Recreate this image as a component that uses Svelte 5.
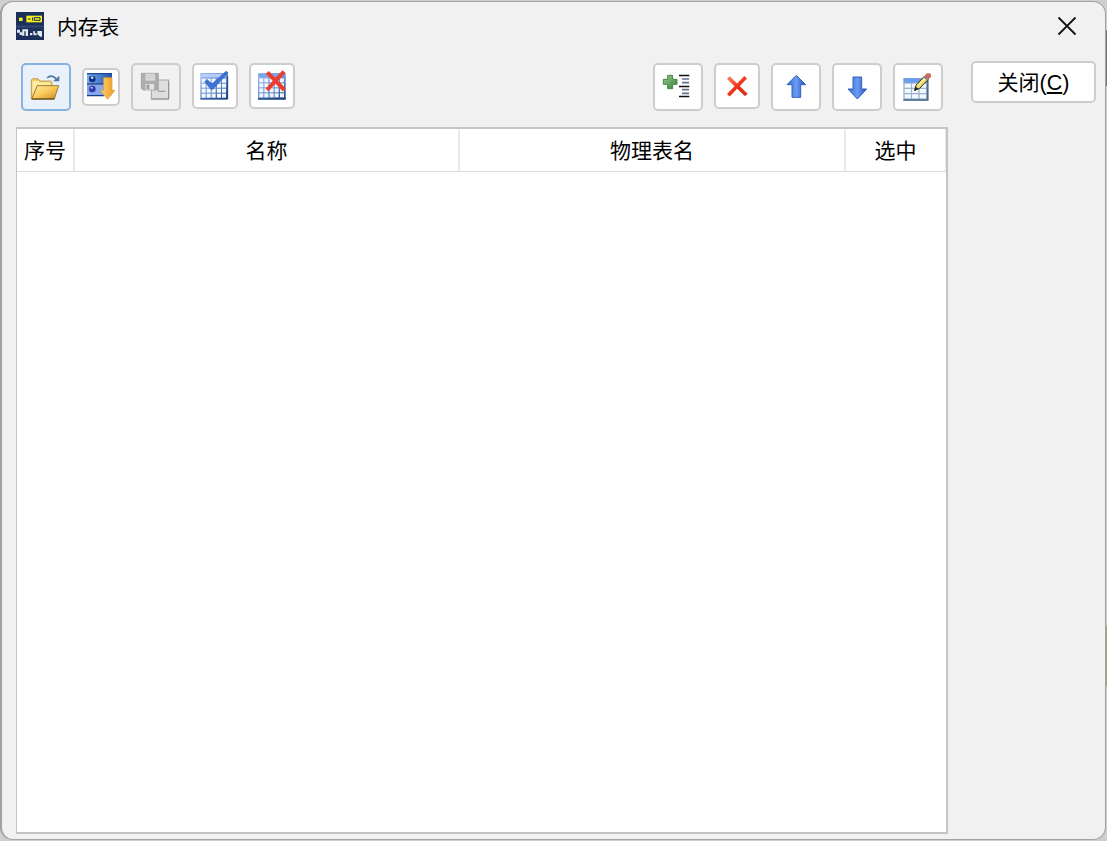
<svelte:options runes={true} />

<script lang="ts">
const columns = [
	{ key: "index", label: "序号", width: 58 },
	{ key: "name", label: "名称", width: 385 },
	{ key: "table", label: "物理表名", width: 386 },
	{ key: "checked", label: "选中", width: 100 },
];
</script>

<div class="desktop">
	<div class="window">
		<header class="titlebar">
			<svg class="app-icon" viewBox="48 36 84 84" aria-hidden="true">
				<rect x="48" y="36" width="84" height="84" fill="#1b2f5c" />
				<rect x="48" y="76" width="84" height="7" fill="#30446d" />
				<rect x="57" y="53" width="11" height="10" fill="#f3ee1c" />
				<path d="M79 47H126V67H79Z" fill="#f3ee1c" />
				<path d="M84 57H92M98 52V62M103 53H120V61H103Z" fill="none" stroke="#1b2f5c" stroke-width="3" />
				<path d="M51 89H60V97H66V105H59V98H51ZM67 88H84V108H77V94H73V107H66ZM90 99H97V106H90ZM99 94H105V100H110V106H101ZM112 93H126V110H121L112 103Z" fill="#e4e8ef" />
			</svg>
			<h1>内存表</h1>
			<button class="dismiss" aria-label="关闭">
				<svg viewBox="0 0 20 20"><path d="M1.5 1.5 18.5 18.5M18.5 1.5 1.5 18.5" /></svg>
			</button>
		</header>

		<div class="content">
			<main>
				<div class="toolbar">
					<div class="group">
						<button class="tool active" aria-label="打开">
							<svg viewBox="33 27 138 132">
								<defs>
									<linearGradient id="folder" x1="0" y1="0" x2="1" y2="1">
										<stop offset="0" stop-color="#fff0a8" />
										<stop offset=".5" stop-color="#fbc95a" />
										<stop offset="1" stop-color="#c98a22" />
									</linearGradient>
								</defs>
								<path d="M58 129V72L62 68H78L83 75H116L120 79V92L110 128Z" fill="#f0c65c" stroke="#a8802c" stroke-width="2" />
								<path d="M61 74H80L84 79H116V88H75L61 120Z" fill="#fdeb9f" />
								<path d="M59 129 76 89H140L127 129Z" fill="url(#folder)" stroke="#8d6a22" stroke-width="2.5" />
								<path d="M60 129H127" stroke="#4d3b16" stroke-width="3" />
								<path d="M105 66Q117 55 130 66L133 70" fill="none" stroke="#57779b" stroke-width="5" />
								<path d="M123 76H142V59Z" fill="#57779b" />
							</svg>
						</button>
						<button class="tool small" aria-label="导入">
							<svg viewBox="216 42 102 102">
								<defs>
									<linearGradient id="server">
										<stop offset="0" stop-color="#79aef2" />
										<stop offset="1" stop-color="#1f52ab" />
									</linearGradient>
									<linearGradient id="gold">
										<stop offset="0" stop-color="#ffd375" />
										<stop offset="1" stop-color="#eb9a1d" />
									</linearGradient>
								</defs>
								<rect x="225" y="51" width="75" height="32" fill="url(#server)" />
								<rect x="225" y="51" width="75" height="4" fill="#1d4b98" />
								<rect x="225" y="87" width="73" height="32" fill="#85a6ed" />
								<path d="M225 84H298M225 119H275" stroke="#183a86" stroke-width="4" />
								<circle cx="241" cy="69" r="10" fill="#12347e" />
								<circle cx="241" cy="99" r="10" fill="#2c3aa8" />
								<path d="M237 62H244V68H237Z" fill="#d9f5ff" />
								<path d="M236 93H242V98H236Z" fill="#bfc8ff" />
								<path d="M275 65H300V103H309L287 130 265 103H275Z" fill="url(#gold)" stroke="#e39a2c" stroke-width="2" />
							</svg>
						</button>
						<button class="tool disabled" aria-label="保存" disabled>
							<svg viewBox="27 27 138 132">
								<rect x="82" y="72" width="52" height="57" fill="#dedede" stroke="#a5a5a5" stroke-width="3" />
								<path d="M83 129H134V76" fill="none" stroke="#8f8f8f" stroke-width="3" />
								<path d="M102 106H124" stroke="#a0a0a0" stroke-width="4" />
								<path d="M52 52H103V102H57L52 97Z" fill="#adadad" stroke="#969696" stroke-width="2" />
								<rect x="64" y="53" width="29" height="21" fill="#dadada" />
								<path d="M66 59H91M66 65H91" stroke="#c3c3c3" stroke-width="2" />
								<rect x="65" y="84" width="25" height="17" fill="#e3e3e3" />
								<rect x="68" y="86" width="8" height="13" fill="#9b9b9b" />
							</svg>
						</button>
						<button class="tool medium" aria-label="全选">
							<svg viewBox="210 27 126 126">
								<defs>
									<linearGradient id="grid" x1="0" y1="0" x2="1" y2="1">
										<stop offset="0" stop-color="#9cbdf2" />
										<stop offset=".6" stop-color="#5f88c4" />
										<stop offset="1" stop-color="#173f80" />
									</linearGradient>
								</defs>
								<rect x="229" y="51" width="83" height="79" fill="url(#grid)" />
								<rect x="232" y="54" width="73" height="10" fill="#b5cdf8" />
								{#each [68, 83, 98, 113] as y (y)}
									{#each [233, 248, 263, 279, 294] as x (x)}
										<rect {x} {y} width="12" height="12" fill="#f4f8ff" />
									{/each}
								{/each}
								<path d="M229 129H311V60" fill="none" stroke="#1d4686" stroke-width="3" />
								<path d="M242 77 250 71 264 84 306 46 312 50 267 100 260 99Z" fill="#3c73d4" stroke="#3163bd" stroke-width="2" />
							</svg>
						</button>
						<button class="tool medium" aria-label="取消全选">
							<svg viewBox="33 27 126 126">
								<rect x="54" y="51" width="83" height="79" fill="url(#grid)" />
								<rect x="57" y="54" width="76" height="9" fill="#7ea4eb" />
								{#each [67, 82, 97, 112] as y (y)}
									{#each [58, 73, 89, 104, 120] as x (x)}
										<rect {x} {y} width="12" height="12" fill="#f2f7ff" />
									{/each}
								{/each}
								<path d="M54 129H137" stroke="#173f76" stroke-width="4" />
								<path d="M82 49 133 102M132 47 81 102" stroke="#ef3b2a" stroke-width="12" />
							</svg>
						</button>
					</div>
					<div class="group">
						<button class="tool" aria-label="添加">
							<svg viewBox="30 27 138 132">
								<defs>
									<linearGradient id="plus" x1="0" y1="0" x2="1" y2="1">
										<stop offset="0" stop-color="#9bce8c" />
										<stop offset="1" stop-color="#347e36" />
									</linearGradient>
								</defs>
								<path d="M68 58H83V70H96V85H83V98H68V85H55V70H68Z" fill="url(#plus)" stroke="#4b8549" stroke-width="3" />
								<path d="M102 58.5H133M102 91.5H133M102 121.5H133" stroke="#111" stroke-width="4" />
								<path d="M111 69H132M111 80H132M111 101H132M111 112H132" stroke="#64748c" stroke-width="5" />
							</svg>
						</button>
						<button class="tool medium" aria-label="删除">
							<svg viewBox="213 27 126 126">
								<defs>
									<linearGradient id="cross" gradientUnits="userSpaceOnUse" x1="250" y1="62" x2="300" y2="120">
										<stop offset="0" stop-color="#ff7c5e" />
										<stop offset=".6" stop-color="#ed2a12" />
										<stop offset="1" stop-color="#d83414" />
									</linearGradient>
								</defs>
								<path d="M250 65 304 117M302 64 250 118" stroke="url(#cross)" stroke-width="11" />
							</svg>
						</button>
						<button class="tool" aria-label="上移">
							<svg viewBox="24 27 138 132">
								<defs>
									<linearGradient id="blue">
										<stop offset="0" stop-color="#3769cd" />
										<stop offset=".5" stop-color="#6a9cf4" />
										<stop offset="1" stop-color="#2450b0" />
									</linearGradient>
								</defs>
								<path d="M94 58 122 86H107V124H81V86H66Z" fill="url(#blue)" stroke="#325fbd" stroke-width="3" />
							</svg>
						</button>
						<button class="tool" aria-label="下移">
							<svg viewBox="207 27 138 132">
								<path d="M264 63H290V99H305L277 129 249 99H264Z" fill="url(#blue)" stroke="#325fbd" stroke-width="3" />
							</svg>
						</button>
						<button class="tool" aria-label="编辑">
							<svg viewBox="390 27 138 132">
								<rect x="415" y="66" width="75" height="68" fill="#9bb3cf" />
								<rect x="416" y="67" width="73" height="13" fill="#6c9bf0" />
								{#each [83, 99, 115] as y (y)}
									{#each [419, 441, 464] as x (x)}
										<rect {x} {y} width="19" height="12" fill="#f3f8fe" />
									{/each}
								{/each}
								<path d="M415 132H488V67" fill="none" stroke="#4d6a87" stroke-width="5" />
								<path d="M449 103 453 88 478 61 489 71 464 97Z" fill="#ecd66b" stroke="#2d2a1d" stroke-width="3" />
								<path d="M457 91 481 66" stroke="#fff3a0" stroke-width="4" />
								<path d="M447 105 452 92 461 99Z" fill="#222" />
								<path d="M477 61 486 52H495L498 56V63L489 71Z" fill="#c96d60" />
								<path d="M476 62 489 72" stroke="#77858c" stroke-width="4" />
							</svg>
						</button>
					</div>
				</div>

				<div class="grid">
					<div class="grid-head">
						{#each columns as column (column.key)}
							<div class="cell" style:width="{column.width}px">{column.label}</div>
						{/each}
					</div>
				</div>
			</main>

			<aside>
				<button class="close">关闭<span>(<u>C</u>)</span></button>
			</aside>
		</div>
	</div>
</div>

<style>
	:global(body) {
		margin: 0;
		overflow: hidden;
	}

	.desktop {
		box-sizing: border-box;
		width: 1107px;
		height: 841px;
		padding: 1px 1px 1px 0;
		/* slivers of the windows behind the dialog */
		background:
			linear-gradient(#77776a, #77776a) right 30px / 2px 56px no-repeat,
			linear-gradient(#a8a86c, #a8a86c) right 626px / 2px 60px no-repeat,
			linear-gradient(#6b8bab, #6b8bab) left 11px / 2px 33px no-repeat,
			linear-gradient(#8bb594, #8bb594) left 48px / 2px 44px no-repeat,
			#cfcfcf;
	}

	.window {
		display: flex;
		flex-direction: column;
		box-sizing: border-box;
		height: 100%;
		border: 1px solid #a2a2a2;
		border-width: 1px 1px 1px 2px;
		border-radius: 13px;
		background: #f1f1f1;
		color: #000;
		font-family: "Noto Sans CJK SC", "Noto Sans", sans-serif;
		font-size: 21px;
	}

	button {
		box-sizing: border-box;
		padding: 0;
		font: inherit;
		color: inherit;
	}

	.titlebar {
		display: flex;
		align-items: center;
		height: 48px;
		padding: 0 28px 0 14px;
	}

	.app-icon {
		width: 28px;
		height: 28px;
	}

	h1 {
		margin: 0 auto 0 13px;
		font-size: 20.8px;
		font-weight: 400;
		line-height: 30px;
	}

	.dismiss {
		display: flex;
		border: 0;
		background: none;
	}

	.dismiss svg {
		width: 20px;
		height: 20px;
		fill: none;
		stroke: #111;
		stroke-width: 1.8;
	}

	.content {
		display: flex;
		flex: 1;
		gap: 23px;
		padding: 11px 9px 5px 14px;
	}

	main {
		display: flex;
		flex-direction: column;
		width: 932px;
	}

	.toolbar {
		display: flex;
		justify-content: space-between;
		height: 66px;
		padding: 0 5px;
		box-sizing: border-box;
	}

	.group {
		display: flex;
		align-items: flex-start;
		gap: 11px;
		padding-top: 2px;
	}

	.tool {
		display: flex;
		width: 50px;
		height: 48px;
		border: 2px solid #cdcdcd;
		border-radius: 5px;
		background: #fff;
	}

	.tool svg {
		width: 100%;
		height: 100%;
	}

	.tool.active {
		border-color: #86b3df;
		background: #e9f2fc;
	}

	.tool.disabled {
		background: #f1f1f1;
	}

	.tool.small {
		width: 38px;
		height: 38px;
		margin-top: 5px;
	}

	.tool.medium {
		width: 46px;
		height: 46px;
	}

	.grid {
		flex: 1;
		box-sizing: border-box;
		border: 2px solid #c4c4c4;
		border-width: 2px 2px 2px 1px;
		background: #fff;
	}

	.grid-head {
		display: flex;
		height: 43px;
		box-sizing: border-box;
		border-bottom: 1px solid #dcdcdc;
	}

	.cell {
		box-sizing: border-box;
		border-right: 2px solid #e9e9e9;
		line-height: 40px;
		text-align: center;
	}

	.cell:last-child {
		border-right-width: 1px;
	}

	.close {
		width: 125px;
		height: 42px;
		padding-bottom: 2px;
		border: 2px solid #cdcdcd;
		border-radius: 5px;
		background: #fff;
	}

	.close span {
		font-family: "Liberation Sans", Arial, sans-serif;
		font-size: 21.5px;
	}
</style>
